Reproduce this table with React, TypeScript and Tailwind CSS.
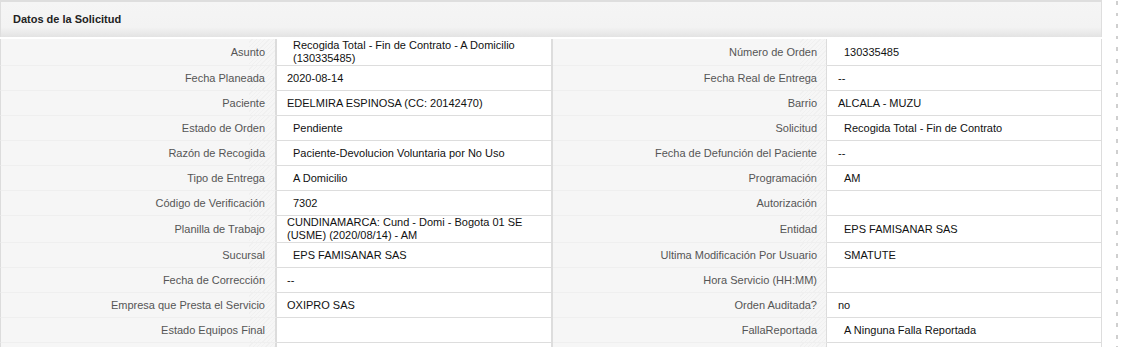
import React from "react";

type Field = { label: string; value: string; indent?: boolean };
type Row = [Field, Field];

const rows: Row[] = [
  [
    { label: "Asunto", value: "Recogida Total - Fin de Contrato - A Domicilio (130335485)", indent: true },
    { label: "Número de Orden", value: "130335485", indent: true },
  ],
  [
    { label: "Fecha Planeada", value: "2020-08-14" },
    { label: "Fecha Real de Entrega", value: "--" },
  ],
  [
    { label: "Paciente", value: "EDELMIRA ESPINOSA (CC: 20142470)" },
    { label: "Barrio", value: "ALCALA - MUZU" },
  ],
  [
    { label: "Estado de Orden", value: "Pendiente", indent: true },
    { label: "Solicitud", value: "Recogida Total - Fin de Contrato", indent: true },
  ],
  [
    { label: "Razón de Recogida", value: "Paciente-Devolucion Voluntaria por No Uso", indent: true },
    { label: "Fecha de Defunción del Paciente", value: "--" },
  ],
  [
    { label: "Tipo de Entrega", value: "A Domicilio", indent: true },
    { label: "Programación", value: "AM", indent: true },
  ],
  [
    { label: "Código de Verificación", value: "7302", indent: true },
    { label: "Autorización", value: "" },
  ],
  [
    { label: "Planilla de Trabajo", value: "CUNDINAMARCA: Cund - Domi - Bogota 01 SE (USME) (2020/08/14) - AM" },
    { label: "Entidad", value: "EPS FAMISANAR SAS", indent: true },
  ],
  [
    { label: "Sucursal", value: "EPS FAMISANAR SAS", indent: true },
    { label: "Ultima Modificación Por Usuario", value: "SMATUTE", indent: true },
  ],
  [
    { label: "Fecha de Corrección", value: "--" },
    { label: "Hora Servicio (HH:MM)", value: "" },
  ],
  [
    { label: "Empresa que Presta el Servicio", value: "OXIPRO SAS" },
    { label: "Orden Auditada?", value: "no" },
  ],
  [
    { label: "Estado Equipos Final", value: "" },
    { label: "FallaReportada", value: "A Ninguna Falla Reportada", indent: true },
  ],
  [
    { label: "", value: "" },
    { label: "", value: "" },
  ],
];

const labelBg =
  "bg-[#f6f6f6] bg-[repeating-linear-gradient(135deg,transparent_0_2px,rgba(0,0,0,0.025)_2px_3px)] bg-[length:26px_100%] bg-right bg-no-repeat";

const App: React.FC = () => {
  return (
    <div className="flex min-h-[347px] bg-white font-['Liberation_Sans',Arial,sans-serif] text-[11px]">
      <div className="w-[1102px] shrink-0">
        <div className="mb-[2px] flex h-[37px] items-center border-x border-t-2 border-[#dedede] bg-[linear-gradient(to_bottom,#f5f5f5_0%,#f3f3f3_72%,#e3e3e3_100%)] pl-[12px]">
          <h2 className="font-bold text-[#222]">Datos de la Solicitud</h2>
        </div>
        <div className="grid grid-cols-[277px_276px_274px_275px]">
          {rows.map(([a, b], i) => (
            <React.Fragment key={i}>
              <div
                className={`flex min-h-[25px] items-center justify-end border-b border-l border-r-2 border-b-[#efefef] border-l-[#dcdcdc] border-r-[#dcdcdc] pr-[10px] text-right text-[#555] ${labelBg}`}
              >
                {a.label}
              </div>
              <div className="flex min-h-[25px] items-center border-b border-r-2 border-[#dddddd] bg-white pl-[10px] pr-2 leading-[13px] text-[#111]">
                <span className={a.indent ? "pl-[6px]" : ""}>{a.value}</span>
              </div>
              <div
                className={`flex min-h-[25px] items-center justify-end border-b border-r border-b-[#efefef] border-r-[#dcdcdc] pr-[9px] text-right text-[#555] ${labelBg}`}
              >
                {b.label}
              </div>
              <div className="flex min-h-[25px] items-center border-b border-r border-[#dddddd] bg-white pl-[11px] pr-2 leading-[13px] text-[#111]">
                <span className={b.indent ? "pl-[6px]" : ""}>{b.value}</span>
              </div>
            </React.Fragment>
          ))}
        </div>
      </div>
      <div className="ml-[14px] w-[2px] shrink-0 self-stretch bg-[repeating-linear-gradient(to_bottom,transparent_0_1px,#cfcfcf_1px_5px,transparent_5px_11.5px)]" />
    </div>
  );
};

export default App;
